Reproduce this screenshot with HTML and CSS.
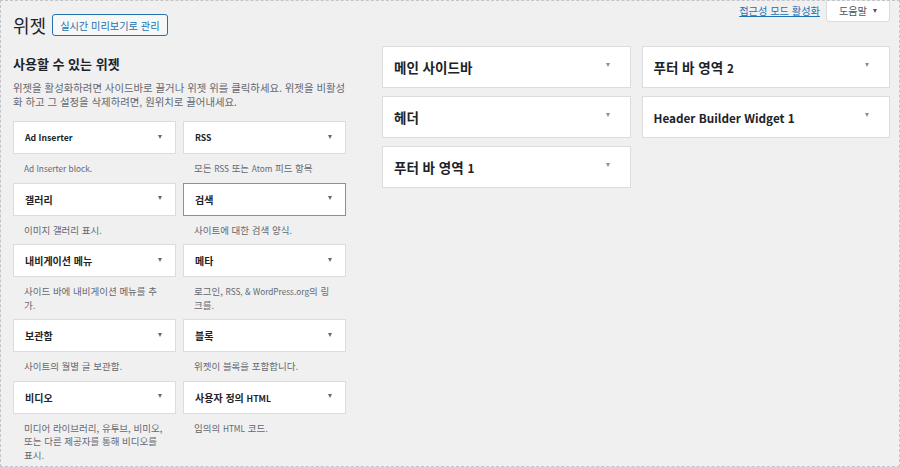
FILE: index.html
```html
<!DOCTYPE html>
<html lang="ko">
<head>
<meta charset="utf-8">
<title>위젯</title>
<link rel="stylesheet" href="styles.css">
</head>
<body>
<div class="wrap">
  <div class="meta-links">
    <a class="a11y-link" href="#">접근성 모드 활성화</a>
    <div class="help-tab">도움말 <span class="tri tri-help"></span></div>
  </div>
  <div class="title-row">
    <h1 class="page-title">위젯</h1>
    <a class="title-action" href="#">실시간 미리보기로 관리</a>
  </div>
  <div class="columns">
    <div class="available">
      <h2 class="avail-title">사용할 수 있는 위젯</h2>
      <p class="intro">위젯을 활성화하려면 사이드바로 끌거나 위젯 위를 클릭하세요. 위젯을 비활성화 하고 그 설정을 삭제하려면, 원위치로 끌어내세요.</p>
      <div class="widget-grid">
        <div class="widget">
          <div class="widget-top"><span class="en">Ad Inserter</span><span class="tri"></span></div>
          <div class="widget-desc"><span class="en">Ad Inserter block.</span></div>
        </div>
        <div class="widget">
          <div class="widget-top"><span class="en">RSS</span><span class="tri"></span></div>
          <div class="widget-desc">모든 <span class="en">RSS</span> 또는 <span class="en">Atom</span> 피드 항목</div>
        </div>
        <div class="widget">
          <div class="widget-top"><span>갤러리</span><span class="tri"></span></div>
          <div class="widget-desc">이미지 갤러리 표시.</div>
        </div>
        <div class="widget">
          <div class="widget-top focused"><span>검색</span><span class="tri"></span></div>
          <div class="widget-desc">사이트에 대한 검색 양식.</div>
        </div>
        <div class="widget">
          <div class="widget-top"><span>내비게이션 메뉴</span><span class="tri"></span></div>
          <div class="widget-desc">사이드 바에 내비게이션 메뉴를 추가.</div>
        </div>
        <div class="widget">
          <div class="widget-top"><span>메타</span><span class="tri"></span></div>
          <div class="widget-desc">로그인, <span class="en">RSS, &amp; WordPress.org</span>의 링크를.</div>
        </div>
        <div class="widget">
          <div class="widget-top"><span>보관함</span><span class="tri"></span></div>
          <div class="widget-desc">사이트의 월별 글 보관함.</div>
        </div>
        <div class="widget">
          <div class="widget-top"><span>블록</span><span class="tri"></span></div>
          <div class="widget-desc">위젯이 블록을 포함합니다.</div>
        </div>
        <div class="widget">
          <div class="widget-top"><span>비디오</span><span class="tri"></span></div>
          <div class="widget-desc">미디어 라이브러리, 유투브, 비미오, 또는 다른 제공자를 통해 비디오를 표시.</div>
        </div>
        <div class="widget">
          <div class="widget-top"><span>사용자 정의 <span class="en">HTML</span></span><span class="tri"></span></div>
          <div class="widget-desc">임의의 <span class="en">HTML</span> 코드.</div>
        </div>
      </div>
    </div>
    <div class="sidebars">
      <div class="sidebar-col">
        <div class="sidebar-card"><span>메인 사이드바</span><span class="tri tri-side"></span></div>
        <div class="sidebar-card"><span>헤더</span><span class="tri tri-side"></span></div>
        <div class="sidebar-card"><span>푸터 바 영역 <span class="en">1</span></span><span class="tri tri-side"></span></div>
      </div>
      <div class="sidebar-col">
        <div class="sidebar-card"><span>푸터 바 영역 <span class="en">2</span></span><span class="tri tri-side"></span></div>
        <div class="sidebar-card"><span class="en">Header Builder Widget 1</span><span class="tri tri-side"></span></div>
      </div>
    </div>
  </div>
</div>
</body>
</html>
```

FILE: styles.css
```css
* { box-sizing: border-box; }

html, body { margin: 0; padding: 0; }

body {
  height: 467px;
  overflow: hidden;
  border: 1px dashed #c3c4c7;
  background: #f0f0f1;
  font-family: "Noto Sans CJK KR", "Noto Sans", sans-serif;
  color: #3c434a;
}

.en {
  font-size: 0.87em;
}

.wrap {
  padding: 0 9px 0 12px;
}

.meta-links {
  float: right;
  display: flex;
  align-items: flex-start;
  gap: 6px;
}

.a11y-link {
  margin-top: 3px;
  font-size: 10.2px;
  line-height: 13px;
  color: #2271b1;
  text-decoration: underline;
}

.help-tab {
  margin-top: -1px;
  height: 22px;
  padding: 0 12px 0 12px;
  background: #fff;
  border: 1px solid #dcdcde;
  border-top: none;
  border-radius: 0 0 4px 4px;
  font-size: 10.2px;
  color: #50575e;
  display: flex;
  align-items: center;
  gap: 6px;
}

.title-row {
  display: flex;
  align-items: center;
  gap: 6px;
  padding-top: 13px;
}

.page-title {
  margin: 0;
  font-size: 18px;
  line-height: 22px;
  font-weight: 400;
  color: #1d2327;
}

.title-action {
  display: flex;
  align-items: center;
  height: 22px;
  padding: 0 7px;
  border: 1px solid #2271b1;
  border-radius: 3px;
  background: #f6f7f7;
  color: #2271b1;
  font-size: 10.2px;
  text-decoration: none;
}

.columns {
  display: flex;
  align-items: flex-start;
  margin-top: 10px;
}

.available {
  width: 333px;
  flex: none;
  margin-right: 36px;
}

.avail-title {
  margin: 9px 0 0;
  font-size: 13px;
  line-height: 17px;
  font-weight: 700;
  color: #1d2327;
}

.intro {
  margin: 9px 0 0;
  font-size: 10.4px;
  line-height: 14px;
  color: #646970;
}

.widget-grid {
  margin-top: 12px;
  display: grid;
  grid-template-columns: 163px 163px;
  column-gap: 7px;
}

.widget-top {
  height: 33px;
  background: #fff;
  border: 1px solid #dcdcde;
  display: flex;
  align-items: center;
  justify-content: space-between;
  padding: 0 13px 0 11px;
  font-size: 10px;
  font-weight: 700;
  color: #1d2327;
}

.widget-top.focused {
  border-color: #8c8f94;
}

.widget-desc {
  padding: 8px 10px 7px 11px;
  font-size: 9.5px;
  line-height: 13.5px;
  color: #646970;
}

.tri {
  display: block;
  flex: none;
  width: 0;
  height: 0;
  border-left: 2.5px solid transparent;
  border-right: 2.5px solid transparent;
  border-top: 4px solid #646970;
  margin-top: -2px;
}

.tri-side {
  border-top-color: #8c8f94;
  margin-top: -4px;
}

.tri-help {
  border-top-color: #50575e;
  margin-top: 0;
}

.sidebars {
  flex: 1;
  display: flex;
  gap: 11px;
}

.sidebar-col {
  flex: 1;
  display: flex;
  flex-direction: column;
  gap: 8px;
}

.sidebar-card {
  height: 42px;
  background: #fff;
  border: 1px solid #dcdcde;
  display: flex;
  align-items: center;
  justify-content: space-between;
  padding: 0 20px 0 11px;
  font-size: 13.5px;
  font-weight: 700;
  color: #1d2327;
}
```
